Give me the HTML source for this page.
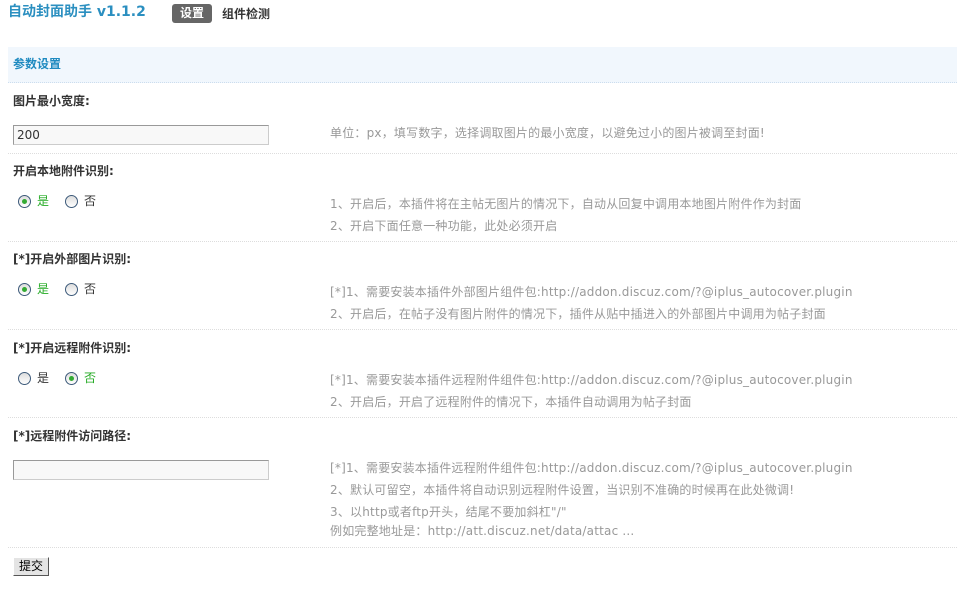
<!DOCTYPE html>
<html><head><meta charset="utf-8"><style>
*{margin:0;padding:0;box-sizing:border-box}
body{width:957px;height:597px;background:#fff;position:relative;overflow:hidden;font-family:"DejaVu Sans","Noto Sans CJK SC",sans-serif;font-size:12px;color:#333}
.a{position:absolute;white-space:nowrap;line-height:16px}
.t{left:8px;top:4px;font-size:14px;font-weight:bold;color:#2b8fc0}
.tab{left:172px;top:4px;width:40px;height:19px;background:#666;color:#fff;border-radius:3px;font-weight:bold;text-align:center;line-height:19px}
.hd{position:absolute;left:8px;top:47px;width:949px;height:36px;background:#f1f7fd;border-bottom:1px dotted #cde}
.lb{left:13px;font-weight:bold;color:#333}
.d{left:330px;color:#999;letter-spacing:0.2px}
.sep{position:absolute;left:8px;width:949px;border-top:1px dotted #ddd;height:0}
.in{position:absolute;left:13px;width:256px;height:20px;border:1px solid #999;border-right-color:#ccc;border-bottom-color:#ccc;background:#f8f8f8;padding-left:3px;font-size:12px;line-height:18px}
.r{position:absolute;width:13px;height:13px;border:1px solid #3d5a7a;border-radius:50%;background:linear-gradient(#ddd,#fff)}
.r.on::after{content:"";position:absolute;left:3px;top:3px;width:5px;height:5px;border-radius:50%;background:#3a3}
.g{color:#2a2}
</style></head><body>
<div class="a t">自动封面助手 v1.1.2</div>
<div class="a tab">设置</div>
<div class="a" style="left:222px;top:6px;font-weight:bold">组件检测</div>
<div class="hd"></div>
<div class="a" style="left:13px;top:56px;font-weight:bold;color:#1e8ac0">参数设置</div>

<div class="a lb" style="top:93px">图片最小宽度:</div>
<div class="in" style="top:125px">200</div>
<div class="a d" style="top:125px">单位：px，填写数字，选择调取图片的最小宽度，以避免过小的图片被调至封面!</div>
<div class="sep" style="top:153px"></div>

<div class="a lb" style="top:163px">开启本地附件识别:</div>
<div class="r on" style="left:18px;top:195px"></div><div class="a g" style="left:37px;top:193px">是</div>
<div class="r" style="left:65px;top:195px"></div><div class="a" style="left:84px;top:193px">否</div>
<div class="a d" style="top:196px">1、开启后，本插件将在主帖无图片的情况下，自动从回复中调用本地图片附件作为封面</div>
<div class="a d" style="top:218px">2、开启下面任意一种功能，此处必须开启</div>
<div class="sep" style="top:241px"></div>

<div class="a lb" style="top:251px">[*]开启外部图片识别:</div>
<div class="r on" style="left:18px;top:283px"></div><div class="a g" style="left:37px;top:281px">是</div>
<div class="r" style="left:65px;top:283px"></div><div class="a" style="left:84px;top:281px">否</div>
<div class="a d" style="top:284px">[*]1、需要安装本插件外部图片组件包:http://addon.discuz.com/?@iplus_autocover.plugin</div>
<div class="a d" style="top:306px">2、开启后，在帖子没有图片附件的情况下，插件从贴中插进入的外部图片中调用为帖子封面</div>
<div class="sep" style="top:329px"></div>

<div class="a lb" style="top:340px">[*]开启远程附件识别:</div>
<div class="r" style="left:18px;top:372px"></div><div class="a" style="left:37px;top:370px">是</div>
<div class="r on" style="left:65px;top:372px"></div><div class="a g" style="left:84px;top:370px">否</div>
<div class="a d" style="top:372px">[*]1、需要安装本插件远程附件组件包:http://addon.discuz.com/?@iplus_autocover.plugin</div>
<div class="a d" style="top:394px">2、开启后，开启了远程附件的情况下，本插件自动调用为帖子封面</div>
<div class="sep" style="top:417px"></div>

<div class="a lb" style="top:428px">[*]远程附件访问路径:</div>
<div class="in" style="top:460px"></div>
<div class="a d" style="top:460px">[*]1、需要安装本插件远程附件组件包:http://addon.discuz.com/?@iplus_autocover.plugin</div>
<div class="a d" style="top:482px">2、默认可留空，本插件将自动识别远程附件设置，当识别不准确的时候再在此处微调!</div>
<div class="a d" style="top:504px">3、以http或者ftp开头，结尾不要加斜杠"/"</div>
<div class="a d" style="top:523px">例如完整地址是：http://att.discuz.net/data/attac ...</div>
<div class="sep" style="top:547px"></div>

<div class="a" style="left:13px;top:557px;width:36px;height:19px;background:#e4e4e4;border:1px solid #fff;border-right-color:#555;border-bottom-color:#555;text-align:center;line-height:17px;color:#000">提交</div>
</body></html>
